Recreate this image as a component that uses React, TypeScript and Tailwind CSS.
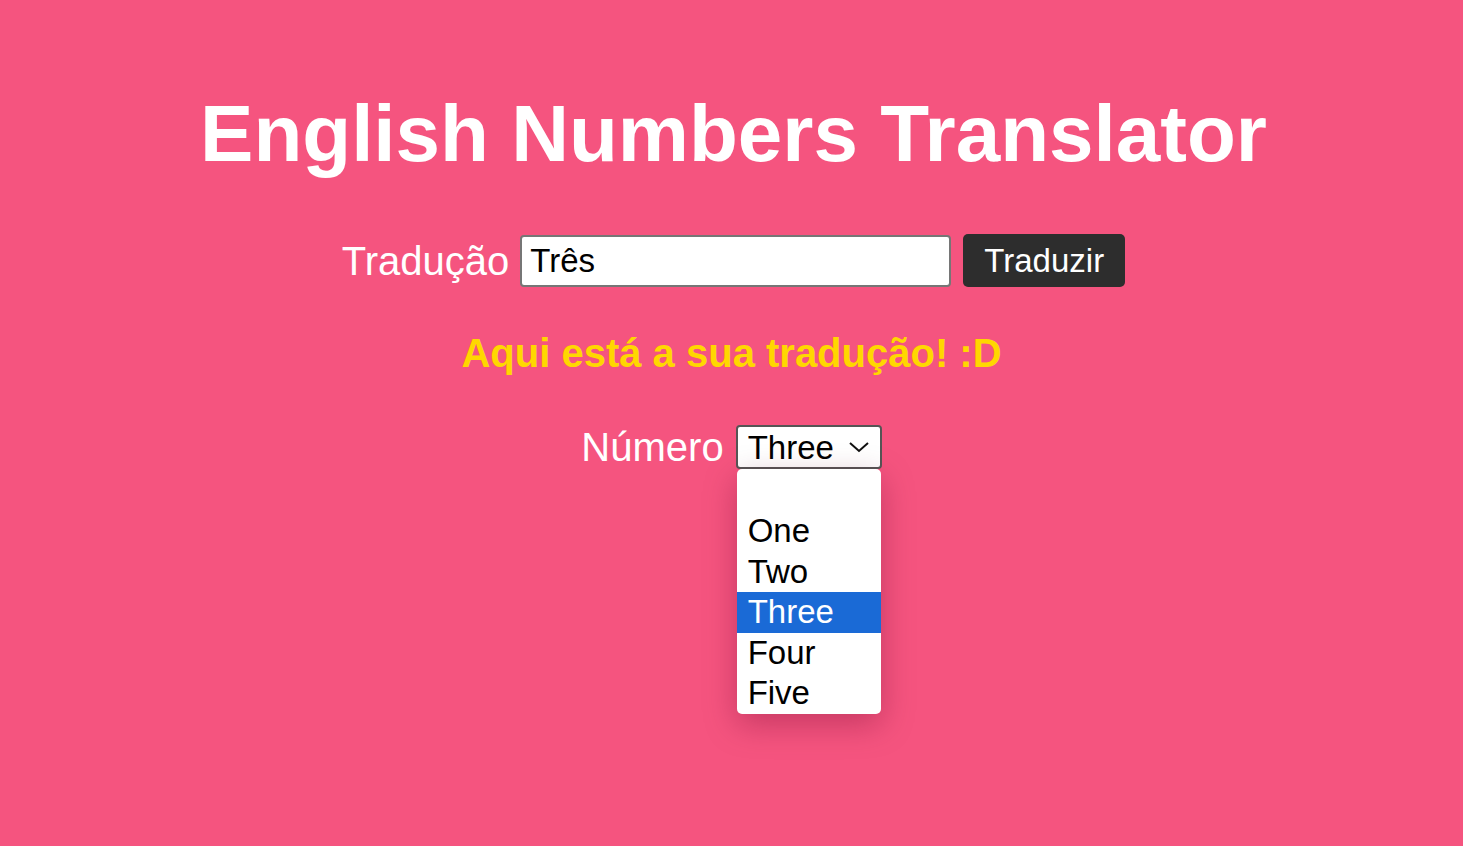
import React from "react";

export default function App() {
  const options = ["", "One", "Two", "Three", "Four", "Five"];
  return (
    <div className="min-h-[846px] w-full bg-[#f5547f] flex flex-col items-center text-white" style={{ fontFamily: '"Liberation Sans", Arial, sans-serif' }}>
      <h1 className="mt-[94px] ml-[4px] text-[80px] leading-[80px] font-bold text-white">English Numbers Translator</h1>
      <div className="mt-[60px] ml-[4px] flex items-center">
        <span className="text-[40px] leading-[52px] mr-[11px]">Tradução</span>
        <div className="w-[431px] h-[52px] bg-white border-2 border-[#767676] rounded-[4px] flex items-center px-[8px]">
          <span className="text-[33px] text-black">Três</span>
        </div>
        <button className="ml-[12px] h-[53px] px-[21px] bg-[#2d2d2d] rounded-[5px] text-[33px] text-white">Traduzir</button>
      </div>
      <p className="mt-[36px] text-[40px] font-bold text-[#ffd700]">Aqui está a sua tradução! :D</p>
      <div className="mt-[42px] flex items-start">
        <span className="text-[40px] leading-[44px] mr-[12px]">Número</span>
        <div className="relative">
          <div className="w-[146px] h-[44px] bg-white border-2 border-[#555] rounded-[4px] flex items-center justify-between pl-[10px] pr-[10px]">
            <span className="text-[33px] text-black leading-none">Three</span>
            <svg width="22" height="14" viewBox="0 0 22 14" fill="none" stroke="#111" strokeWidth="2"><path d="M2 3 L11 11 L20 3" /></svg>
          </div>
          <div className="absolute left-[1px] top-[44px] w-[144px] bg-white rounded-[5px] pt-[2px] pb-[1px] shadow-[0_10px_32px_rgba(110,10,45,0.35)]">
            {options.map((o, i) => (
              <div key={i} className={`h-[40.4px] leading-[40.4px] pl-[11px] text-[33px] ${o === "Three" ? "bg-[#1a6ad6] text-white" : "text-black"}`}>{o}</div>
            ))}
          </div>
        </div>
      </div>
    </div>
  );
}
